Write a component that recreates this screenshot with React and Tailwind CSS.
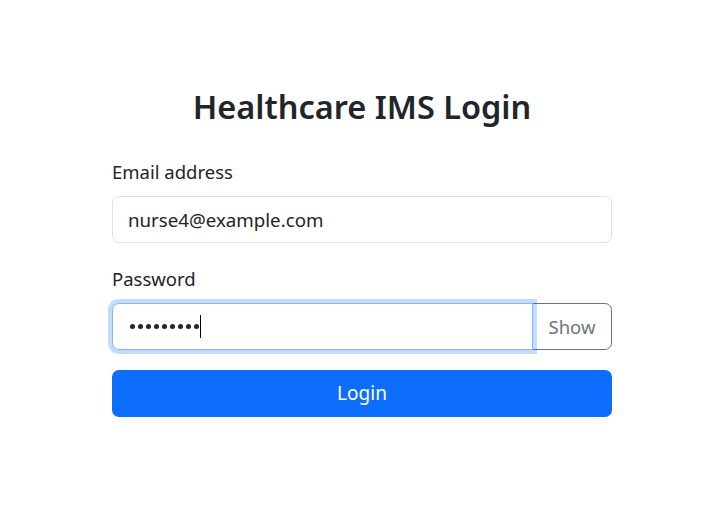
export default function App() {
  const dots = [0, 1, 2, 3, 4, 5, 6, 7, 8];
  return (
    <div
      className="min-h-screen bg-white pl-[15px] flex justify-center text-[#212529]"
      style={{ fontFamily: '"Noto Sans", "Liberation Sans", sans-serif' }}
    >
      <div className="w-[500px] pt-[87px]">
        <h1 className="text-center text-[32.5px] leading-[1.2] font-semibold mb-[31px]">
          Healthcare IMS Login
        </h1>

        <label className="block text-[18.5px] leading-[30px] mb-[9px]">Email address</label>
        <input
          readOnly
          value="nurse4@example.com"
          className="block w-full h-[47px] px-[15px] text-[18.7px] text-[#212529] border border-[#dee2e6] rounded-[7px] bg-white outline-none"
        />

        <label className="block text-[18.5px] leading-[30px] mt-[21px] mb-[9px]">Password</label>
        <div className="flex h-[47px]">
          <div className="relative z-10 flex-1 flex items-center pl-[17px] border border-[#86b7fe] rounded-l-[7px] bg-white shadow-[0_0_0_4px_rgba(13,110,253,0.25)]">
            <span className="flex gap-[3px]" aria-label="password">
              {dots.map((d) => (
                <span key={d} className="w-[5px] h-[5px] rounded-full bg-[#212529]" />
              ))}
            </span>
            <span className="ml-[1px] w-px h-[23px] bg-black" />
          </div>
          <button className="w-[80px] text-[18.5px] text-[#6c757d] border border-[#6c757d] rounded-r-[7px] bg-white -ml-px">
            Show
          </button>
        </div>

        <button className="mt-[20px] w-full h-[47px] rounded-[7px] bg-[#0d6efd] text-white text-[19px]">
          Login
        </button>
      </div>
    </div>
  );
}
